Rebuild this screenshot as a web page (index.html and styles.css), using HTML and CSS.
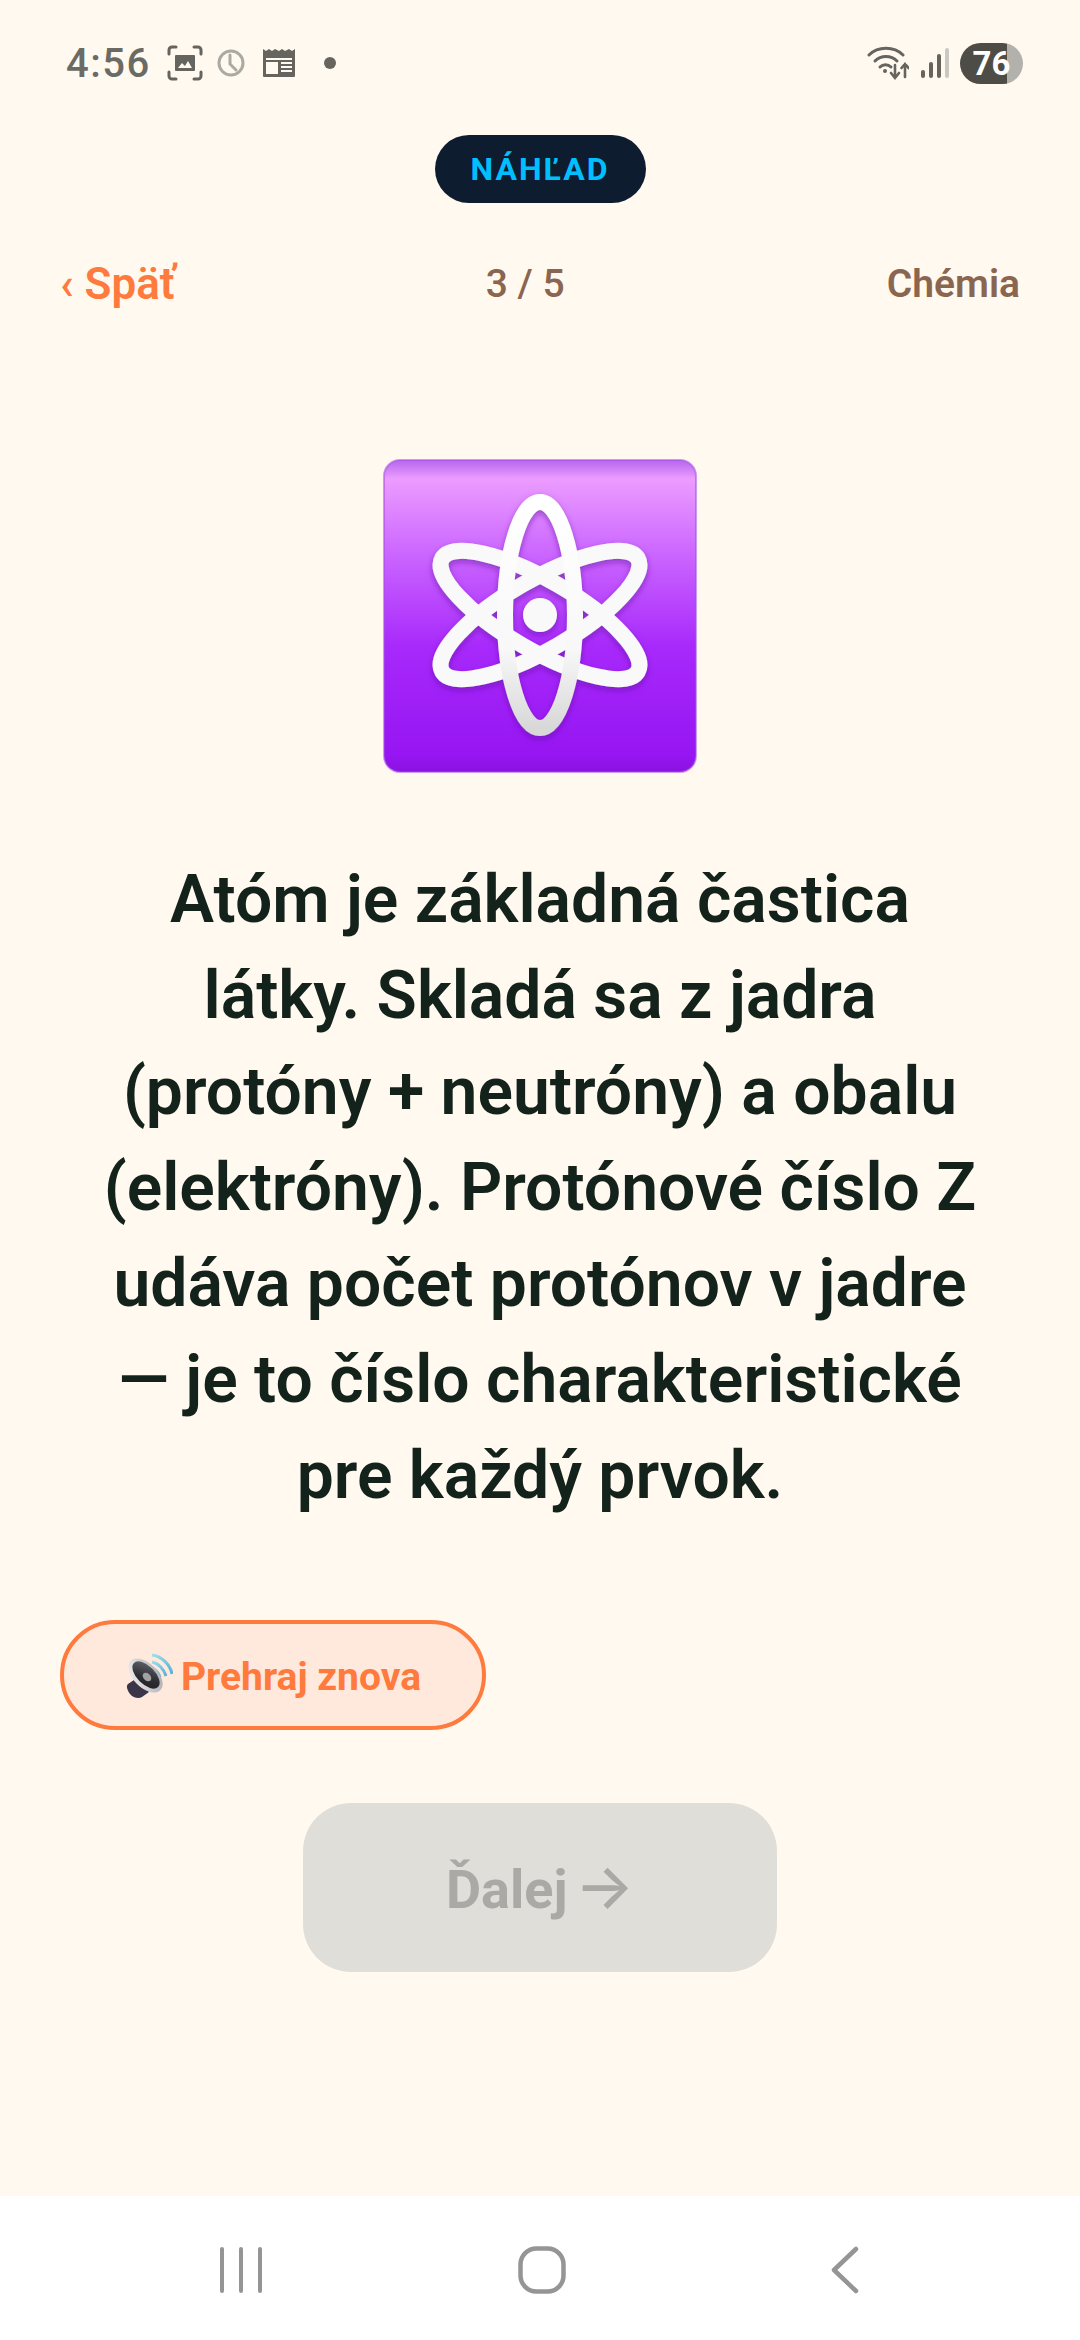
FILE: index.html
```html
<!DOCTYPE html>
<html lang="sk">
<head>
    <meta charset="UTF-8">
    <meta name="viewport" content="width=device-width, initial-scale=1.0">
    <title>Chémia – náhľad</title>
    <link rel="stylesheet" href="styles.css">
</head>
<body>
    <div class="status-bar">
        <div class="status-left">
            <span class="clock">4:56</span>
            <svg class="ic-capture" viewBox="0 0 36 36" width="36" height="36" fill="none" stroke="#66645f" stroke-width="3" stroke-linecap="round">
                <path d="M2 9V5a3 3 0 0 1 3-3h4M27 2h4a3 3 0 0 1 3 3v4M34 27v4a3 3 0 0 1-3 3h-4M9 34H5a3 3 0 0 1-3-3v-4"/>
                <path d="M9 10h18a1 1 0 0 1 1 1v14a1 1 0 0 1-1 1H9a1 1 0 0 1-1-1V11a1 1 0 0 1 1-1z" fill="#66645f" stroke="none"/>
                <path d="M11 23l4-5 3 3 3-5 4 7z" fill="#fff9f0" stroke="none"/>
            </svg>
            <svg class="ic-alarm" viewBox="0 0 28 28" width="28" height="28" fill="none" stroke="#aaa9a3" stroke-width="3" stroke-linecap="round">
                <circle cx="14" cy="14" r="12"/>
                <path d="M13 6v9l6 6"/>
            </svg>
            <svg class="ic-news" viewBox="0 0 34 30" width="34" height="30">
                <path d="M1 1l3 2 3-2 3 2 3-2 4 2 3-2 3 2 4-2 3 2 3-2v27a1 1 0 0 1-1 1H2a1 1 0 0 1-1-1z" fill="#66645f"/>
                <rect x="4" y="10" width="26" height="2" fill="#fff9f0"/>
                <rect x="4" y="14" width="12" height="12" fill="#fff9f0"/>
                <path d="M19 15h11M19 19h11M19 23h11" stroke="#fff9f0" stroke-width="2"/>
            </svg>
            <span class="dot"></span>
        </div>
        <div class="status-right">
            <svg class="ic-wifi" viewBox="0 0 42 36" width="42" height="36" fill="none" stroke="#66645f" stroke-width="3" stroke-linecap="round">
                <path d="M2 10C11 1 27 1 36 10"/>
                <path d="M8 16c6-6 16-6 22 0"/>
                <path d="M13 22c3-3 8-3 11 0"/>
                <circle cx="18" cy="26" r="2" fill="#66645f" stroke="none"/>
                <path d="M28 20v12M24 28l4 5 4-5" stroke-width="2.6"/>
                <path d="M38 32V19M34.500 23l3.500-4 3.500 4" stroke-width="2.6"/>
            </svg>
            <div class="signal">
                <span class="sig-bar sig-1"></span>
                <span class="sig-bar sig-2"></span>
                <span class="sig-bar sig-3"></span>
                <span class="sig-bar sig-4"></span>
            </div>
            <div class="battery"><span class="battery-num">76</span></div>
        </div>
    </div>

    <div class="main">
        <div class="badge">NÁHĽAD</div>

        <div class="top-nav">
            <span class="back">‹ Späť</span>
            <span class="progress">3 / 5</span>
            <span class="subject">Chémia</span>
        </div>

        <svg class="atom" viewBox="0 0 314 314" width="314" height="314">
            <defs>
                <linearGradient id="atomBg" x1="0" y1="0" x2="0" y2="1">
                    <stop offset="0" stop-color="#b566ee"/>
                    <stop offset="0.06" stop-color="#ec9cff"/>
                    <stop offset="0.3" stop-color="#cb66ff"/>
                    <stop offset="0.6" stop-color="#a829fb"/>
                    <stop offset="0.95" stop-color="#9615f2"/>
                    <stop offset="1" stop-color="#8a12de"/>
                </linearGradient>
                <linearGradient id="atomInk" x1="0" y1="0" x2="0" y2="1">
                    <stop offset="0" stop-color="#ffffff"/>
                    <stop offset="0.65" stop-color="#f8f8f8"/>
                    <stop offset="1" stop-color="#d8d8d8"/>
                </linearGradient>
                <filter id="atomShadow" x="-10%" y="-10%" width="120%" height="120%">
                    <feDropShadow dx="0" dy="3" stdDeviation="3" flood-color="#5b0a99" flood-opacity="0.55"/>
                </filter>
            </defs>
            <rect x="1" y="1" width="312" height="312" rx="16" fill="url(#atomBg)" stroke="#a44fe6" stroke-opacity="0.55" stroke-width="2"/>
            <g filter="url(#atomShadow)" fill="none" stroke="#f9f9f9" stroke-width="16">
                <ellipse cx="157" cy="156" rx="35" ry="113" transform="rotate(60 157 156)"/>
                <ellipse cx="157" cy="156" rx="35" ry="113" transform="rotate(-60 157 156)"/>
                <ellipse cx="157" cy="156" rx="35" ry="113" stroke="url(#atomInk)"/>
                <circle cx="157" cy="156" r="17" fill="#f9f9f9" stroke="none"/>
            </g>
        </svg>

        <p class="fact">Atóm je základná častica látky. Skladá sa z jadra (protóny + neutróny) a obalu (elektróny). Protónové číslo Z udáva počet protónov v jadre — je to číslo charakteristické pre každý prvok.</p>

        <div class="replay-row">
            <button class="replay" type="button">
                <svg class="speaker" viewBox="0 0 48 48" width="48" height="48">
                    <defs>
                        <linearGradient id="rimFill" x1="0" y1="0" x2="1" y2="1">
                            <stop offset="0" stop-color="#f4f4f4"/>
                            <stop offset="1" stop-color="#a6a6ac"/>
                        </linearGradient>
                        <linearGradient id="coneFill" x1="1" y1="0" x2="0" y2="1">
                            <stop offset="0" stop-color="#6a6b70"/>
                            <stop offset="0.6" stop-color="#2c2d33"/>
                            <stop offset="1" stop-color="#1f2026"/>
                        </linearGradient>
                        <linearGradient id="waveFill" x1="0" y1="0" x2="1" y2="1">
                            <stop offset="0" stop-color="#9adfee"/>
                            <stop offset="1" stop-color="#58b0d8"/>
                        </linearGradient>
                    </defs>
                    <g fill="none" stroke="url(#waveFill)" stroke-width="3">
                        <path d="M27 2c9 1 18 9 20 19"/>
                        <path d="M27 9c6 1 12 7 14 14"/>
                        <path d="M27 15c3 1 7 5 8 9"/>
                    </g>
                    <path d="M3 31l9-6 12 14-7 5c-3 2-9 1-12-3s-4-8-2-10z" fill="#3a3548"/>
                    <ellipse cx="20.500" cy="22.500" rx="12" ry="21" transform="rotate(-45 20.500 22.500)" fill="url(#rimFill)"/>
                    <ellipse cx="21" cy="22" rx="9" ry="17" transform="rotate(-45 21 22)" fill="url(#coneFill)"/>
                    <ellipse cx="22" cy="24" rx="3.500" ry="5" transform="rotate(-45 22 24)" fill="#a2a2a2"/>
                </svg>
                <span>Prehraj znova</span>
            </button>
        </div>

        <button class="next" type="button" disabled>Ďalej <span class="next-arrow">→</span></button>
    </div>

    <div class="nav-bar">
        <svg class="nav-recents" viewBox="0 0 44 48" width="44" height="48" fill="none" stroke="#959595" stroke-width="4" stroke-linecap="round">
            <path d="M3 3v42M22 3v42M41 3v42"/>
        </svg>
        <svg class="nav-home" viewBox="0 0 48 48" width="48" height="48" fill="none" stroke="#959595" stroke-width="4.500">
            <rect x="2.500" y="2.500" width="43" height="43" rx="16"/>
        </svg>
        <svg class="nav-back" viewBox="0 0 28 48" width="28" height="48" fill="none" stroke="#959595" stroke-width="4.500" stroke-linecap="round" stroke-linejoin="round">
            <path d="M25 3L3 24l22 21"/>
        </svg>
    </div>
</body>
</html>
```

FILE: styles.css
```css
* {
    margin: 0;
    padding: 0;
    box-sizing: border-box;
}

body {
    font-family: 'Roboto', sans-serif;
    background: #fff9f0;
    width: 1080px;
    height: 2340px;
    display: flex;
    flex-direction: column;
    overflow: hidden;
}

.status-bar {
    height: 126px;
    flex-shrink: 0;
    display: flex;
    justify-content: space-between;
    align-items: center;
    padding: 0 57px 0 66px;
}

.status-left {
    display: flex;
    align-items: center;
}

.clock {
    font-size: 40px;
    font-weight: 500;
    letter-spacing: 1.5px;
    color: #6c6a65;
    width: 101px;
}

.ic-alarm {
    margin-left: 14px;
}

.ic-news {
    margin-left: 17px;
}

.dot {
    width: 12px;
    height: 12px;
    border-radius: 50%;
    background: #66645f;
    margin-left: 28px;
}

.status-right {
    display: flex;
    align-items: center;
}

.signal {
    display: flex;
    align-items: flex-end;
    gap: 4px;
    height: 30px;
    margin-left: 12px;
}

.sig-bar {
    width: 4px;
    border-radius: 2px;
    background: #66645f;
}

.sig-1 { height: 8px; }
.sig-2 { height: 16px; }
.sig-3 { height: 24px; }
.sig-4 { height: 30px; background: #c9c8c2; }

.battery {
    width: 63px;
    height: 41px;
    margin-left: 11px;
    border-radius: 21px;
    background: linear-gradient(90deg, #4e4c47 0, #4e4c47 47px, #b3b1ab 47px);
    display: flex;
    align-items: center;
    justify-content: center;
}

.battery-num {
    font-size: 33px;
    font-weight: 700;
    color: #fff;
}

.main {
    flex: 1;
    display: flex;
    flex-direction: column;
    align-items: center;
}

.badge {
    margin-top: 9px;
    width: 211px;
    height: 68px;
    border-radius: 34px;
    background: #0e1c30;
    color: #00bfff;
    font-size: 32px;
    font-weight: 700;
    letter-spacing: 2px;
    display: flex;
    align-items: center;
    justify-content: center;
}

.top-nav {
    align-self: stretch;
    margin-top: 51px;
    height: 60px;
    padding: 0 60px;
    display: flex;
    justify-content: space-between;
    align-items: center;
}

.back {
    color: #ff7a3d;
    font-size: 44px;
    font-weight: 600;
}

.progress,
.subject {
    color: #8a6650;
    font-size: 39px;
    font-weight: 600;
}

.progress {
    font-weight: 500;
    margin-right: 12px;
}

.atom {
    margin-top: 145px;
    flex-shrink: 0;
}

.fact {
    margin-top: 79px;
    width: 880px;
    font-size: 66px;
    font-weight: 600;
    line-height: 96px;
    text-align: center;
    color: #13221a;
}

.replay-row {
    align-self: stretch;
    padding: 0 60px;
    margin-top: 96px;
}

.replay {
    width: 426px;
    height: 110px;
    padding-top: 3px;
    border: 4px solid #ff7a3d;
    border-radius: 55px;
    background: #ffe8dc;
    color: #ff7a3d;
    font-family: inherit;
    font-size: 39px;
    font-weight: 700;
    display: flex;
    align-items: center;
    justify-content: center;
    gap: 8px;
}

.next {
    margin-top: 73px;
    width: 474px;
    height: 169px;
    border: none;
    border-radius: 48px;
    background: #dfded9;
    color: #aaa9a5;
    font-family: inherit;
    font-size: 54px;
    font-weight: 700;
}

.next-arrow {
    font-family: 'Inter', sans-serif;
    font-size: 62px;
    font-weight: 500;
    line-height: 1;
    margin-left: -6px;
}

.nav-bar {
    height: 144px;
    flex-shrink: 0;
    background: #fff;
    display: flex;
    align-items: flex-start;
    padding: 50px 0 0 219px;
}

.nav-home {
    margin-left: 255px;
}

.nav-back {
    margin-left: 265px;
}
```
